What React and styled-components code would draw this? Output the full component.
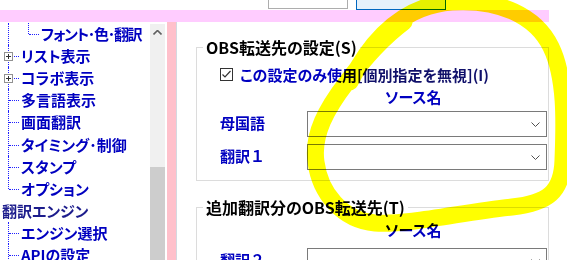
import React from 'react';
import styled, { createGlobalStyle } from 'styled-components';

const GlobalStyle = createGlobalStyle`
  html, body {
    margin: 0;
    padding: 0;
    background: #ffffff;
  }
`;

const BLUE = '#0000c0';
const FONT = '"Noto Sans CJK JP", "Noto Sans", sans-serif';

const Screen = styled.div`
  position: relative;
  width: 567px;
  height: 260px;
  overflow: hidden;
  background: #ffffff;
  display: flex;
  flex-direction: column;
  font-family: ${FONT};
  font-feature-settings: 'palt';
`;

const ButtonStrip = styled.div`
  flex: none;
  height: 10px;
  display: flex;
  align-items: flex-end;
  overflow: hidden;
`;

const TopButton = styled.div`
  flex: none;
  box-sizing: border-box;
  width: ${(p) => p.w}px;
  height: 24px;
  margin-left: ${(p) => p.gap}px;
  margin-bottom: ${(p) => (p.focused ? 0 : 1)}px;
  border: 1px solid ${(p) => (p.focused ? '#0067c0' : '#adadad')};
  background: ${(p) => (p.focused ? '#e5f1fb' : '#ffffff')};
`;

const PinkBand = styled.div`
  flex: none;
  width: 549px;
  height: 12px;
  background: #ffccff;
`;

const Body = styled.div`
  flex: 1;
  display: flex;
  min-height: 0;
`;

const TreePanel = styled.div`
  flex: none;
  width: 150px;
  padding-top: 0.5px;
  overflow: hidden;
`;

const TreeRow = styled.div`
  display: flex;
  align-items: center;
  height: 22.2px;
  white-space: nowrap;
`;

const Guide = styled.span`
  position: relative;
  flex: none;
  align-self: stretch;
  width: 20px;

  &::before {
    content: '';
    position: absolute;
    left: 8px;
    top: 0;
    bottom: ${(p) => (p.half ? '50%' : '0')};
    border-left: 1px dotted #2020ff;
  }

  &::after {
    content: '';
    position: absolute;
    left: 9px;
    width: 10px;
    top: 50%;
    border-top: 1px dotted #2020ff;
    display: ${(p) => (p.hline ? 'block' : 'none')};
  }
`;

const PlusBox = styled.span`
  position: absolute;
  z-index: 1;
  left: 4px;
  top: calc(50% - 4px);
  width: 9px;
  height: 9px;
  box-sizing: border-box;
  border: 1px solid #919191;
  background: #ffffff;

  &::before,
  &::after {
    content: '';
    position: absolute;
    background: #333333;
  }
  &::before {
    left: 1px;
    top: 3px;
    width: 5px;
    height: 1px;
  }
  &::after {
    left: 3px;
    top: 1px;
    width: 1px;
    height: 5px;
  }
`;

const TreeLabel = styled.span`
  margin-left: ${(p) => (p.root ? 2 : 1)}px;
  font-size: 15px;
  line-height: 20px;
  font-weight: 700;
  letter-spacing: ${(p) => (p.tight ? '-1.3px' : '0')};
  color: ${(p) => (p.root ? '#1c1c8c' : BLUE)};
`;

const ScrollBar = styled.div`
  flex: none;
  width: 15px;
  margin-top: 2px;
  display: flex;
  flex-direction: column;
  background: #f0f0f0;
`;

const ScrollArrow = styled.div`
  flex: none;
  height: 17px;
  display: flex;
  align-items: center;
  justify-content: center;
`;

const ScrollThumb = styled.div`
  flex: 1;
  margin-top: 126px;
  background: #cdcdcd;
`;

const PinkStrip = styled.div`
  flex: none;
  width: 9px;
  margin-left: 2px;
  background: #ffc0cb;
  border-right: 1px solid #d4d8e0;
`;

const Main = styled.div`
  flex: 1;
  min-width: 0;
  padding: 15px 0 0 19px;
  overflow: hidden;
`;

const Group = styled.fieldset`
  box-sizing: border-box;
  width: 353px;
  margin: 0 0 16px 0;
  padding: 0 0 ${(p) => p.bottom}px 0;
  border: 1px solid #dcdcdc;
  min-width: 0;
`;

const GroupTitle = styled.legend`
  margin-left: 6px;
  padding: 0 3px;
  font-size: 16px;
  line-height: 20px;
  font-weight: 700;
  color: #000000;
`;

const GroupBody = styled.div`
  padding-left: 23px;
`;

const CheckRow = styled.div`
  display: flex;
  align-items: center;
  height: 18px;
  margin-top: 8px;
  font-size: 15px;
  font-weight: 700;
  white-space: nowrap;
`;

const CheckBox = styled.span`
  flex: none;
  box-sizing: border-box;
  width: 13px;
  height: 13px;
  border: 1px solid #333333;
  background: #ffffff;
  display: flex;
  align-items: center;
  justify-content: center;
`;

const CheckText = styled.span`
  margin-left: 7px;
  color: ${BLUE};
`;

const Bracket = styled.span`
  color: #10106a;
`;

const SourceHead = styled.div`
  height: 18px;
  margin-top: ${(p) => p.top}px;
  padding-left: 165px;
  font-size: 15px;
  line-height: 18px;
  font-weight: 700;
  color: ${BLUE};
`;

const FieldRow = styled.div`
  display: flex;
  align-items: center;
  margin-top: ${(p) => p.top}px;
`;

const FieldLabel = styled.span`
  flex: none;
  width: 87px;
  margin-top: -3px;
  font-size: 15px;
  line-height: 18px;
  font-weight: 700;
  font-feature-settings: normal;
  color: ${BLUE};
`;

const Select = styled.div`
  flex: none;
  box-sizing: border-box;
  width: 240px;
  height: 26px;
  border: 1px solid #7a7a7a;
  background: #ffffff;
  display: flex;
  align-items: center;
  justify-content: flex-end;
  padding-right: 6px;
`;

const Highlight = styled.svg`
  position: absolute;
  left: 0;
  top: 0;
  width: 567px;
  height: 260px;
  pointer-events: none;
  mix-blend-mode: multiply;
`;

const Chevron = ({ up }) => (
  <svg width="9" height="5" viewBox="0 0 9 5">
    <path
      d={up ? 'M0.5 4.5 L4.5 0.5 L8.5 4.5' : 'M0.5 0.5 L4.5 4.5 L8.5 0.5'}
      fill="none"
      stroke={up ? '#606060' : '#505050'}
      strokeWidth={up ? 1.6 : 1}
    />
  </svg>
);

const Check = () => (
  <svg width="11" height="11" viewBox="0 0 11 11">
    <path d="M1.5 5.5 L4 8 L9.5 2" fill="none" stroke="#333333" strokeWidth="1.2" />
  </svg>
);

const treeItems = [
  { label: 'フォント･色･翻訳', level: 2, tight: true },
  { label: 'リスト表示', plus: true },
  { label: 'コラボ表示', plus: true },
  { label: '多言語表示' },
  { label: '画面翻訳' },
  { label: 'タイミング･制御' },
  { label: 'スタンプ' },
  { label: 'オプション', half: true },
  { label: '翻訳エンジン', root: true },
  { label: 'エンジン選択' },
  { label: 'APIの設定' },
];

const TreeItem = ({ label, level, plus, half, root, tight }) => {
  if (root) {
    return (
      <TreeRow>
        <TreeLabel root>{label}</TreeLabel>
      </TreeRow>
    );
  }
  return (
    <TreeRow>
      {level === 2 && <Guide />}
      <Guide hline half={half || level === 2}>
        {plus && <PlusBox />}
      </Guide>
      <TreeLabel tight={tight}>{label}</TreeLabel>
    </TreeRow>
  );
};

const Field = ({ label, top }) => (
  <FieldRow top={top}>
    <FieldLabel>{label}</FieldLabel>
    <Select>
      <Chevron />
    </Select>
  </FieldRow>
);

const App = () => (
  <Screen>
    <GlobalStyle />
    <ButtonStrip>
      <TopButton w={80} gap={268} />
      <TopButton w={90} gap={8} focused />
    </ButtonStrip>
    <PinkBand />
    <Body>
      <TreePanel>
        {treeItems.map((item) => (
          <TreeItem key={item.label} {...item} />
        ))}
      </TreePanel>
      <ScrollBar>
        <ScrollArrow>
          <Chevron up />
        </ScrollArrow>
        <ScrollThumb />
      </ScrollBar>
      <PinkStrip />
      <Main>
        <Group bottom={10}>
          <GroupTitle>OBS転送先の設定(S)</GroupTitle>
          <GroupBody>
            <CheckRow>
              <CheckBox>
                <Check />
              </CheckBox>
              <CheckText>
                この設定のみ使用<Bracket>[個別指定を無視](I)</Bracket>
              </CheckText>
            </CheckRow>
            <SourceHead top={5}>ソース名</SourceHead>
            <Field label="母国語" top={5} />
            <Field label="翻訳１" top={7} />
          </GroupBody>
        </Group>
        <Group bottom={10}>
          <GroupTitle>追加翻訳分のOBS転送先(T)</GroupTitle>
          <GroupBody>
            <SourceHead top={4}>ソース名</SourceHead>
            <Field label="翻訳２" top={9} />
          </GroupBody>
        </Group>
      </Main>
    </Body>
    <Highlight viewBox="0 0 567 260">
      <path
        d="M350 82 C368 46, 398 6, 452 2 C500 -1, 536 16, 551 47 C567 80, 564 130, 563 160 C562 192, 548 203, 512 207 C462 212, 412 225, 375 223 C342 220, 320 193, 316 162 C312 134, 327 108, 347 82 C363 60, 380 40, 404 22"
        fill="none"
        stroke="#ffff00"
        strokeWidth="17"
        strokeLinecap="round"
        strokeLinejoin="round"
      />
    </Highlight>
  </Screen>
);

export default App;
